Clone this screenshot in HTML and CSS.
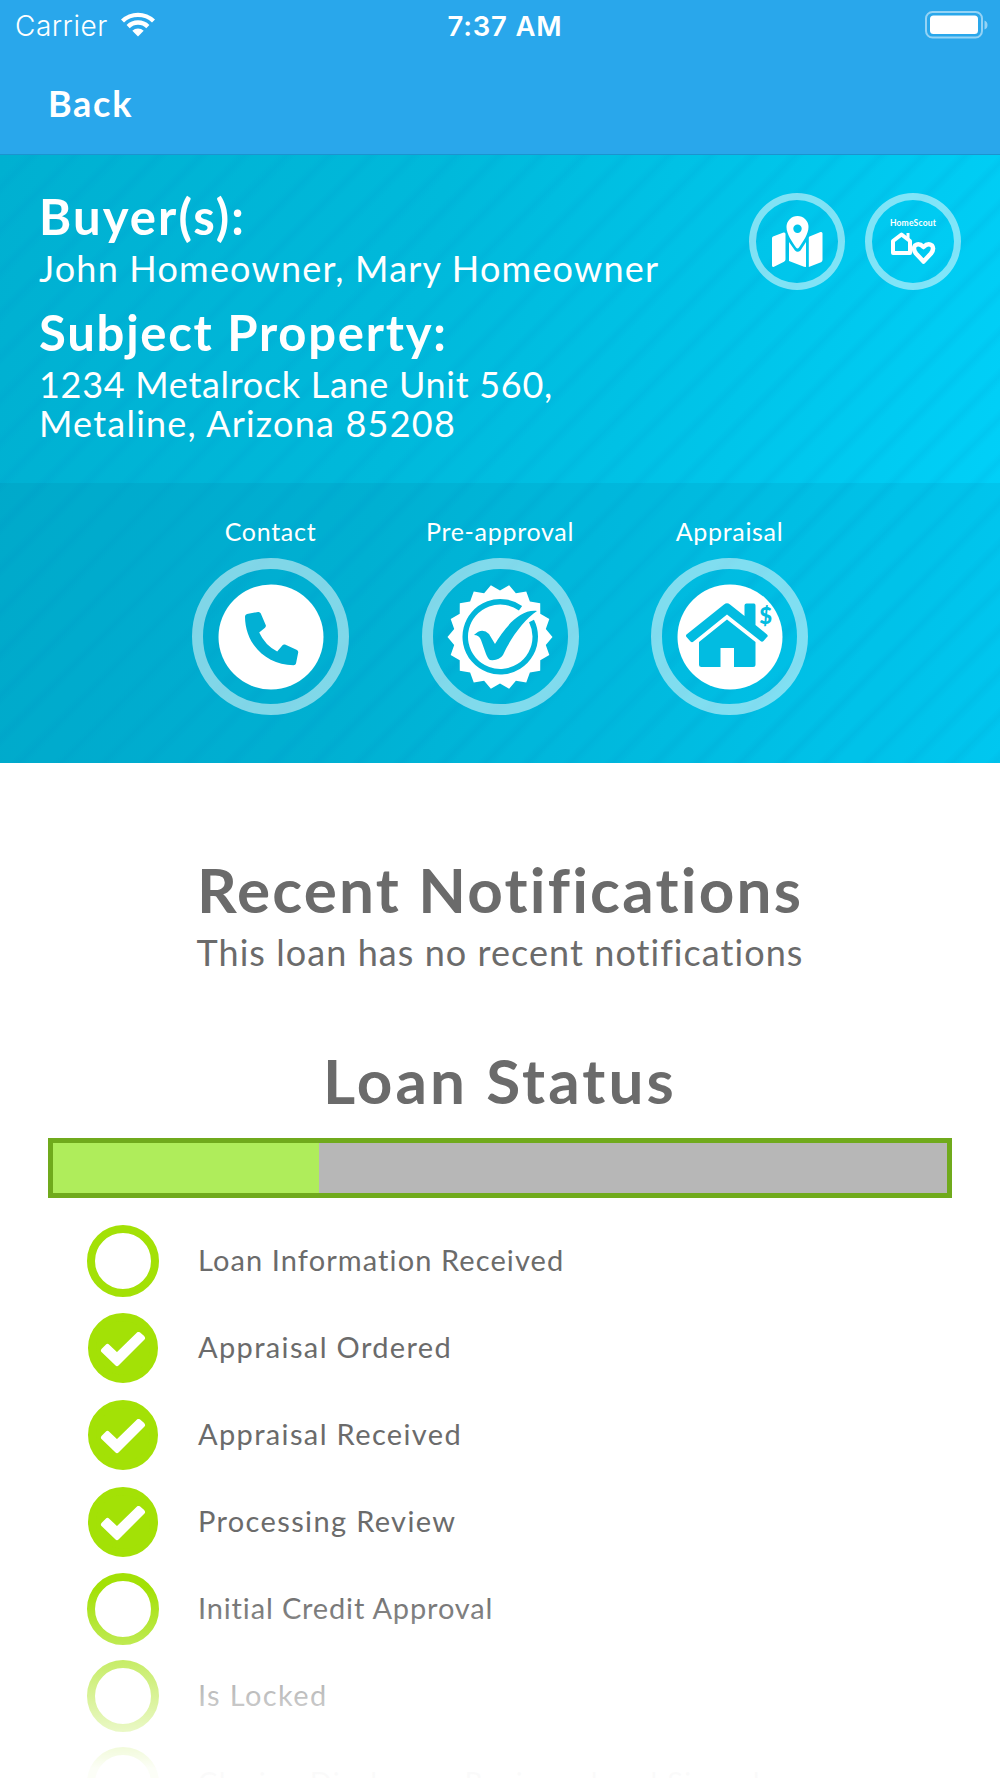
FILE: index.html
```html
<!DOCTYPE html>
<html lang="en">
<head>
    <meta charset="UTF-8">
    <meta name="viewport" content="width=device-width, initial-scale=1.0">
    <title>Loan Details</title>
    <link rel="stylesheet" href="styles.css">
</head>
<body>
    <header class="top">
        <div class="status-bar">
            <div class="carrier">
                <span>Carrier</span>
                <svg class="wifi" viewBox="0 0 34 25">
                    <path d="M0 7.5A24.5 24.5 0 0 1 34 7.5L31 10.6A20 20 0 0 0 3 10.6Z"/>
                    <path d="M5.6 13A16.3 16.3 0 0 1 28.4 13L25.3 16.2A12 12 0 0 0 8.7 16.2Z"/>
                    <path d="M11.3 18.8A8.4 8.4 0 0 1 22.7 18.8L17 24.6Z"/>
                </svg>
            </div>
            <span class="time">7:37 AM</span>
            <svg class="battery" viewBox="0 0 64 28">
                <rect x="1" y="1" width="56" height="25.5" rx="6.5" fill="none" stroke="#fff" stroke-opacity=".5" stroke-width="2"/>
                <rect x="5" y="4.5" width="48" height="18.5" rx="3.5" fill="#fff"/>
                <path d="M59.5 9.5Q62.5 10.5 62.5 14T59.5 18.5Z" fill="#fff" fill-opacity=".5"/>
            </svg>
        </div>
        <nav class="nav"><a class="back">Back</a></nav>
    </header>

    <section class="hero">
        <div class="info">
            <div class="details">
                <h2 class="buyers-title">Buyer(s):</h2>
                <p class="buyers">John Homeowner, Mary Homeowner</p>
                <h2 class="property-title">Subject Property:</h2>
                <p class="street">1234 Metalrock Lane Unit 560,</p>
                <p class="city">Metaline, Arizona 85208</p>
            </div>
            <div class="links">
                <a class="round">
                    <svg class="map" viewBox="0 0 52 52">
                        <path d="M2 20.5L12.5 16.5Q14.5 16 14.5 18V43.5Q14.5 45 13 45.7L3 50.7Q1 51.5 1 49.5V22.3Q1 21 2 20.5Z"/>
                        <path d="M18 26L24 34.5Q26.5 37 29.5 34.5L35 26V51L33 50.7L18 45Z"/>
                        <path d="M38.5 20.5L49.5 16Q51.5 15.5 51.5 17.5V44Q51.5 45.5 50 46.2L37.8 51V21.7Q37.8 21 38.5 20.5Z"/>
                        <path fill-rule="evenodd" d="M26.5 0A11 11 0 0 1 37.5 11C37.5 18 32 25.5 28 31.5Q26.5 33.5 25 31.5C21 25.5 15.5 18 15.5 11A11 11 0 0 1 26.5 0ZM26.5 8.5A4.2 4.2 0 1 0 26.5 16.9A4.2 4.2 0 0 0 26.5 8.5Z"/>
                    </svg>
                </a>
                <a class="round scout">
                    <span>HomeScout</span>
                    <svg viewBox="0 0 46 34" fill="none" stroke="#fff" stroke-linejoin="round">
                        <path stroke-width="4" d="M3 9L11.5 2.5L20 9V21H3Z"/>
                        <path stroke-width="3" d="M18 1V8"/>
                        <path stroke-width="4.5" d="M33.5 29.5L26 21.5Q22.5 17 25 13.5Q29 10.5 33.5 15Q38 10.5 42 13.5Q44.5 17 41 21.5Z"/>
                    </svg>
                </a>
            </div>
        </div>
        <div class="actions">
            <div class="action">
                <span>Contact</span>
                <div class="ring">
                    <svg viewBox="-53 -53 106 106">
                        <circle r="52.5" fill="#fff"/>
                        <path fill="#02b0d4" d="M-26-20.5Q-26-22.5-24-23L-13-25Q-11-25.3-10.2-23.5L-5.2-11.8Q-4.8-10.5-6-9.3L-11.8-4.5Q-6 8.2 6.2 14.5L11.5 8.3Q12.5 7 14 7.6L25.5 12.7Q27.5 13.5 27.2 15.5L25 26.5Q24.5 28.2 22.5 28.2C-5 28-26 7-26-20.5Z"/>
                    </svg>
                </div>
            </div>
            <div class="action">
                <span>Pre-approval</span>
                <div class="ring">
                    <svg viewBox="-53 -53 106 106">
                        <path class="seal" fill="#fff" d=""/>
                        <path fill="none" stroke="#02b6da" stroke-width="5.5" d="M20.5-28.8A35 35 0 1 0 31.5-16"/>
                        <path fill="#02b6da" d="M-26-2Q-18-10-11-3L-5 7C5-10 20-28 37-26C25-18 11 0 3 18Q-1 24-10 23Q-12 22-14 17L-19 3Q-21-2-26-2Z"/>
                    </svg>
                </div>
            </div>
            <div class="action">
                <span>Appraisal</span>
                <div class="ring">
                    <svg viewBox="-53 -53 106 106">
                        <circle r="52.5" fill="#fff"/>
                        <g fill="#02bce1">
                            <path d="M-43.5-2.5L-6-32.5Q-3-35 0-32.5L14.5-21V-31.5Q14.5-33.5 16.5-33.5H24Q25.5-33.5 25.5-31.5V-12L37-2.5Q38.5-1 37 0L33.5 4Q32 5.5 30.5 4L-3-22.5L-36.5 4.5Q-38 6-39.5 4.5L-43.5 0Q-44.5-1.5-43.5-2.5Z"/>
                            <path d="M-3-17.5L25.5 5V27.5Q25.5 30 23 30H4V11H-9.5V30H-28.5Q-31 30-31 27.5V5Z"/>
                        </g>
                        <text class="dollar" x="36" y="-13.5" text-anchor="middle">$</text>
                    </svg>
                </div>
            </div>
        </div>
    </section>

    <main class="content">
        <h1 class="recent">Recent Notifications</h1>
        <p class="none">This loan has no recent notifications</p>
        <h1 class="status">Loan Status</h1>
        <div class="progress"><div class="progress-fill" style="width: 29.8%"></div></div>
        <ul class="steps">
            <li><i class="dot"></i><span>Loan Information Received</span></li>
            <li><i class="dot done"><svg viewBox="0 0 46 36"><path d="M3.5 18.5L17 31.5L42.5 6L38.5 2.5L17 23.5L7.5 14.5Z"/></svg></i><span>Appraisal Ordered</span></li>
            <li><i class="dot done"><svg viewBox="0 0 46 36"><path d="M3.5 18.5L17 31.5L42.5 6L38.5 2.5L17 23.5L7.5 14.5Z"/></svg></i><span>Appraisal Received</span></li>
            <li><i class="dot done"><svg viewBox="0 0 46 36"><path d="M3.5 18.5L17 31.5L42.5 6L38.5 2.5L17 23.5L7.5 14.5Z"/></svg></i><span>Processing Review</span></li>
            <li><i class="dot"></i><span class="credit">Initial Credit Approval</span></li>
            <li><i class="dot"></i><span>Is Locked</span></li>
            <li><i class="dot"></i><span>Closing Disclosure Reviewed and Signed</span></li>
        </ul>
        <div class="fade"></div>
    </main>
    <script src="script.js"></script>
</body>
</html>
```
FILE: script.js
```js
// build the zigzag edge of the pre-approval seal
const teeth = 18;
const points = [];
for (let i = 0; i < teeth * 2; i++) {
    const r = i % 2 ? 46.5 : 52.5;
    const a = Math.PI * i / teeth;
    points.push((r * Math.cos(a)).toFixed(2) + ' ' + (r * Math.sin(a)).toFixed(2));
}
document.querySelector('.seal').setAttribute('d', 'M' + points.join('L') + 'Z');
```
FILE: styles.css
```css
* {
    box-sizing: border-box;
}
body {
    margin: 0;
    height: 1778px;
    overflow: hidden;
    background-color: #fff;
    color: #6b6b6b;
    font-family: Lato, "Liberation Sans", sans-serif;
}
h1, h2, p, ul {
    margin: 0;
    padding: 0;
}
svg {
    display: block;
}
.top {
    height: 155px;
    background-color: #29a7eb;
    border-bottom: 1px solid #1b94cf;
    color: #fff;
}
.status-bar {
    display: grid;
    grid-template-columns: 1fr auto 1fr;
    align-items: center;
    height: 52px;
    padding: 0 11px 0 15px;
    font-family: Inter, sans-serif;
    font-size: 28px;
}
.carrier {
    display: flex;
    align-items: center;
    gap: 13px;
    font-weight: 300;
    letter-spacing: 0.5px;
}
.wifi {
    width: 34px;
    height: 25px;
    margin-top: -3px;
    fill: #fff;
}
.time {
    padding-left: 6px;
    font-size: 27.5px;
    font-weight: 600;
    letter-spacing: 0.8px;
}
.battery {
    width: 64px;
    height: 28px;
    margin-top: -3px;
    justify-self: end;
}
.nav {
    padding: 29px 48px 0;
}
.back {
    font-size: 36px;
    line-height: 44px;
    font-weight: 700;
    letter-spacing: 1.7px;
}
.hero {
    height: 608px;
    color: #fff;
    background:
        repeating-linear-gradient(135deg, rgba(0, 140, 200, 0) 0 16px, rgba(0, 140, 200, 0.11) 23px, rgba(0, 140, 200, 0) 30px),
        linear-gradient(102deg, #00b0d1 0%, #00b9db 40%, #00c5ea 70%, #00d2fb 100%);
}
.info {
    display: flex;
    justify-content: space-between;
    height: 328px;
    padding: 33px 39px 0;
}
.info h2 {
    font-size: 49px;
    line-height: 56px;
    font-weight: 700;
    margin-bottom: 5px;
}
.info p {
    font-size: 36px;
    line-height: 39px;
    white-space: nowrap;
}
.info .buyers-title {
    letter-spacing: 2.1px;
}
.info .buyers {
    letter-spacing: 1.2px;
}
.info .property-title {
    margin-top: 16px;
    letter-spacing: 1.75px;
}
.info .street {
    letter-spacing: 0.7px;
}
.info .city {
    letter-spacing: 1.22px;
}
.links {
    display: flex;
    gap: 20px;
    padding-top: 5px;
}
.round {
    display: flex;
    flex-direction: column;
    align-items: center;
    width: 96px;
    height: 97px;
    border: 7px solid rgba(255, 255, 255, 0.5);
    border-radius: 50%;
}
.map {
    width: 52px;
    height: 52px;
    margin-top: 16px;
    fill: #fff;
}
.scout span {
    margin-top: 17px;
    font-size: 8.5px;
    line-height: 12px;
    font-weight: 700;
    letter-spacing: 0.2px;
}
.scout svg {
    width: 46px;
    height: 34px;
    margin-top: 3px;
}
.actions {
    display: flex;
    justify-content: center;
    height: 280px;
    padding-top: 33px;
    background-color: rgba(0, 80, 120, 0.08);
}
.action {
    display: flex;
    flex-direction: column;
    align-items: center;
    gap: 12px;
    width: 229.5px;
    font-size: 25px;
    line-height: 30px;
    letter-spacing: 0.7px;
}
.ring {
    display: flex;
    align-items: center;
    justify-content: center;
    width: 157px;
    height: 157px;
    border: 11px solid rgba(255, 255, 255, 0.5);
    border-radius: 50%;
}
.ring svg {
    width: 106px;
    height: 106px;
}
.dollar {
    font-size: 22px;
    font-weight: 900;
    fill: #02bce1;
}
.content {
    position: relative;
    height: 1015px;
    padding: 91px 48px 0;
    text-align: center;
}
.content h1 {
    font-size: 62px;
    line-height: 70px;
    font-weight: 700;
}
.content .recent {
    letter-spacing: 2.2px;
}
.content .status {
    letter-spacing: 3.1px;
}
.none {
    margin: 6px 0 71px;
    font-size: 36px;
    line-height: 44px;
    letter-spacing: 1.06px;
}
.progress {
    height: 60px;
    margin-top: 23px;
    border: 5px solid #70aa1c;
    background-color: #b7b7b7;
}
.progress-fill {
    height: 100%;
    background-color: #afed5b;
}
.steps {
    margin-top: 19px;
    padding-left: 39px;
    list-style: none;
}
.steps li {
    display: flex;
    align-items: center;
    gap: 39px;
    height: 87px;
    font-size: 29px;
    letter-spacing: 1.36px;
}
.steps li:first-child {
    letter-spacing: 1.1px;
}
.steps span {
    padding-bottom: 2px;
    white-space: nowrap;
}
.steps .credit {
    letter-spacing: 0.85px;
}
.dot {
    display: flex;
    align-items: center;
    justify-content: center;
    width: 72px;
    height: 72px;
    border: 8px solid #a3e106;
    border-radius: 50%;
}
.dot.done {
    width: 70px;
    height: 70px;
    margin: 0 1px;
    background-color: #a3e106;
}
.dot svg {
    flex: none;
    width: 46px;
    height: 36px;
    margin-top: 4px;
    fill: #fff;
    stroke: #fff;
    stroke-width: 5;
    stroke-linejoin: round;
}
/* list dissolves into the bottom edge of the screen */
.fade {
    position: absolute;
    left: 0;
    right: 0;
    bottom: 0;
    height: 190px;
    background: linear-gradient(rgba(255, 255, 255, 0), rgba(255, 255, 255, 0.97) 95%);
}
```
